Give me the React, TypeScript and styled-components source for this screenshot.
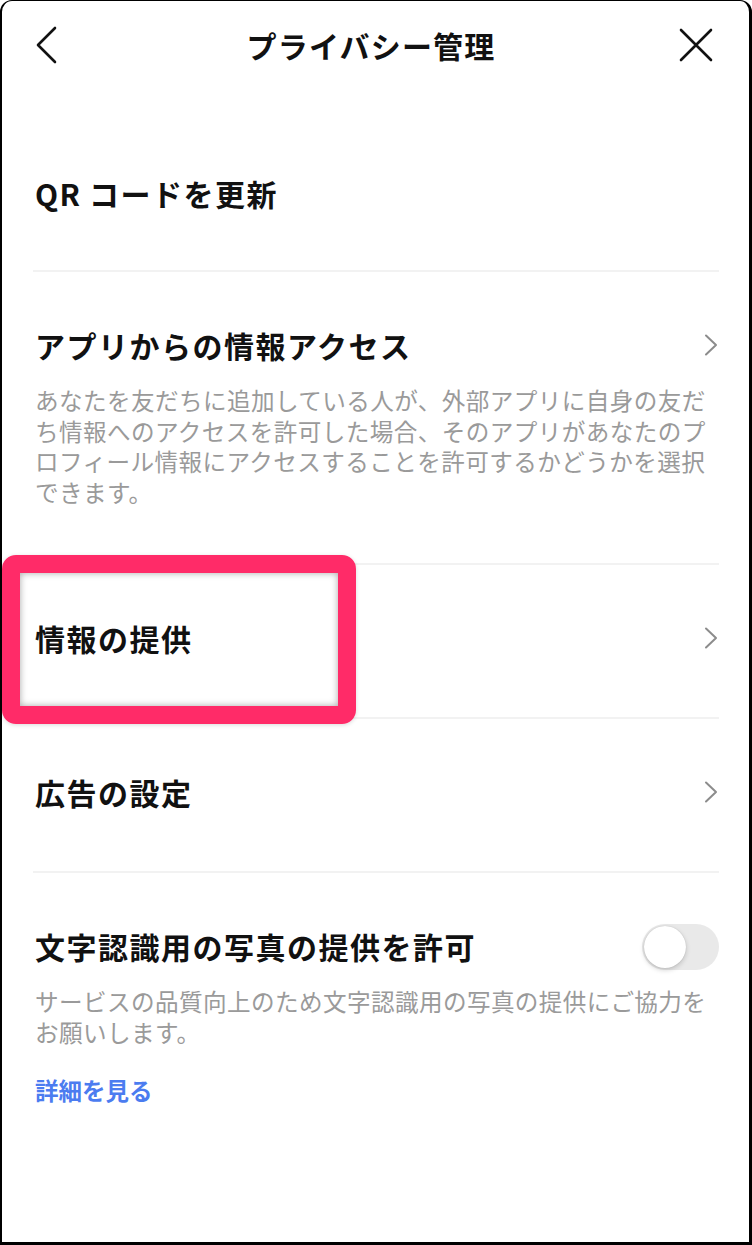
import React, { useState } from 'react';
import styled, { createGlobalStyle } from 'styled-components';

const GlobalStyle = createGlobalStyle`
  html, body {
    margin: 0;
    padding: 0;
    background: #fff;
  }
  body {
    font-family: "Noto Sans CJK JP", "Noto Sans", sans-serif;
    -webkit-font-smoothing: antialiased;
  }
`;

const Frame = styled.div`
  position: relative;
  box-sizing: border-box;
  width: 752px;
  height: 1245px;
  border-style: solid;
  border-color: #000;
  border-width: 1px 3px 3px 2px;
  border-radius: 12px 12px 0 0;
  background: #fff;
  overflow: hidden;
`;

const Header = styled.header`
  height: 88px;
  display: flex;
  align-items: center;
  justify-content: space-between;
  padding: 0 36px 0 27px;
`;

const IconButton = styled.button`
  display: flex;
  align-items: center;
  justify-content: center;
  width: 34px;
  height: 40px;
  padding: 0;
  border: 0;
  background: none;
  cursor: pointer;
`;

const HeaderTitle = styled.h1`
  margin: 0;
  font-size: 30px;
  font-weight: 700;
  color: #111;
  letter-spacing: 1.2px;
`;

const List = styled.div`
  margin-top: 30px;
  padding: 0 30px 0 31px;
`;

const Row = styled.div<{ $top: number; $bottom: number; $last?: boolean }>`
  padding: ${(p) => p.$top}px 0 ${(p) => p.$bottom}px;
  border-bottom: ${(p) => (p.$last ? 'none' : '2px solid #f2f2f2')};
`;

const RowHead = styled.div`
  display: flex;
  align-items: center;
  justify-content: space-between;
  min-height: 42px;
`;

const RowTitle = styled.div`
  font-size: 30px;
  line-height: 42px;
  font-weight: 700;
  color: #111;
  letter-spacing: 1.5px;
  padding-left: 2px;
`;

const Desc = styled.p<{ $gap: number }>`
  margin: ${(p) => p.$gap}px 0 0;
  padding-left: 2px;
  font-size: 23.6px;
  line-height: 30.5px;
  color: #9a9a9a;
  letter-spacing: 0.4px;
`;

const LinkText = styled.a`
  display: block;
  margin-top: 28px;
  padding-left: 2px;
  font-size: 23.5px;
  line-height: 31px;
  font-weight: 700;
  color: #4b7cf0;
  text-decoration: none;
`;

const Track = styled.button<{ $on: boolean }>`
  position: relative;
  width: 77px;
  height: 46px;
  border-radius: 23px;
  border: 0;
  padding: 0;
  background: ${(p) => (p.$on ? '#07b53b' : '#e9e9e9')};
  cursor: pointer;
  flex-shrink: 0;
  margin-top: 2px;
`;

const Knob = styled.span<{ $on: boolean }>`
  position: absolute;
  top: 2px;
  left: ${(p) => (p.$on ? '33px' : '2px')};
  width: 42px;
  height: 42px;
  border-radius: 50%;
  background: #fff;
  box-shadow: 0 2px 5px rgba(0, 0, 0, 0.18), 0 0 1px rgba(0, 0, 0, 0.2);
`;

const Highlight = styled.div`
  position: absolute;
  left: 0;
  top: 554px;
  width: 354px;
  height: 169px;
  box-sizing: border-box;
  border: 18px solid #ff2b68;
  border-radius: 14px;
  box-shadow: inset 0 0 7px rgba(0, 0, 0, 0.35), 0 1px 4px rgba(0, 0, 0, 0.15);
  pointer-events: none;
`;

const Chevron = () => (
  <svg width="16" height="24" viewBox="0 0 16 24" fill="none">
    <path d="M3 2.5 L13 12 L3 21.5" stroke="#8c8c8c" strokeWidth="2" strokeLinecap="round" strokeLinejoin="round" />
  </svg>
);

const BackIcon = () => (
  <svg width="26" height="38" viewBox="0 0 26 38" fill="none">
    <path d="M22 2 L5 19 L22 36" stroke="#111" strokeWidth="2.6" strokeLinecap="round" strokeLinejoin="round" />
  </svg>
);

const CloseIcon = () => (
  <svg width="34" height="34" viewBox="0 0 34 34" fill="none">
    <path d="M2 2 L32 32 M32 2 L2 32" stroke="#111" strokeWidth="2.6" strokeLinecap="round" />
  </svg>
);

export default function App() {
  const [ocr, setOcr] = useState(false);

  return (
    <>
      <GlobalStyle />
      <Frame>
        <Header>
          <IconButton aria-label="戻る">
            <BackIcon />
          </IconButton>
          <HeaderTitle>プライバシー管理</HeaderTitle>
          <IconButton aria-label="閉じる">
            <CloseIcon />
          </IconButton>
        </Header>

        <List>
          <Row $top={53} $bottom={56}>
            <RowHead>
              <RowTitle>QR&#8201;コードを更新</RowTitle>
            </RowHead>
          </Row>

          <Row $top={52} $bottom={56}>
            <RowHead>
              <RowTitle>アプリからの情報アクセス</RowTitle>
              <Chevron />
            </RowHead>
            <Desc $gap={19}>
              あなたを友だちに追加している人が、外部アプリに自身の友だち情報へのアクセスを許可した場合、そのアプリがあなたのプロフィール情報にアクセスすることを許可するかどうかを選択できます。
            </Desc>
          </Row>

          <Row $top={52} $bottom={58}>
            <RowHead>
              <RowTitle>情報の提供</RowTitle>
              <Chevron />
            </RowHead>
          </Row>

          <Row $top={52} $bottom={58}>
            <RowHead>
              <RowTitle>広告の設定</RowTitle>
              <Chevron />
            </RowHead>
          </Row>

          <Row $last $top={49} $bottom={40}>
            <RowHead>
              <RowTitle>文字認識用の写真の提供を許可</RowTitle>
              <Track $on={ocr} onClick={() => setOcr(!ocr)} aria-label="文字認識用の写真の提供を許可">
                <Knob $on={ocr} />
              </Track>
            </RowHead>
            <Desc $gap={16}>
              サービスの品質向上のため文字認識用の写真の提供にご協力をお願いします。
            </Desc>
            <LinkText href="#">詳細を見る</LinkText>
          </Row>
        </List>

        <Highlight />
      </Frame>
    </>
  );
}
